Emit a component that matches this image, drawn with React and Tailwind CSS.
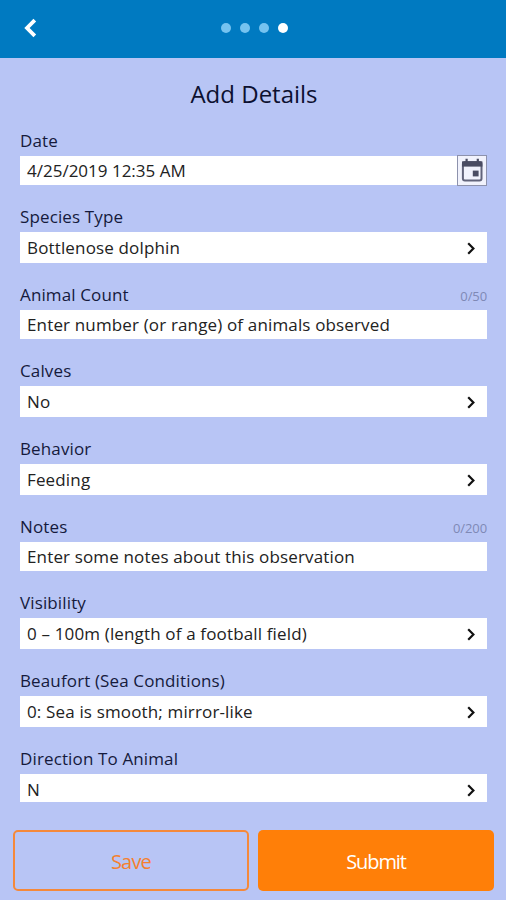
import clsx from "clsx";

const FIELDS = [
  { label: "Date", value: "4/25/2019 12:35 AM", type: "date" },
  { label: "Species Type", value: "Bottlenose dolphin", type: "select" },
  {
    label: "Animal Count",
    value: "Enter number (or range) of animals observed",
    type: "text",
    counter: "0/50",
  },
  { label: "Calves", value: "No", type: "select" },
  { label: "Behavior", value: "Feeding", type: "select" },
  {
    label: "Notes",
    value: "Enter some notes about this observation",
    type: "text",
    counter: "0/200",
  },
  { label: "Visibility", value: "0 – 100m (length of a football field)", type: "select" },
  { label: "Beaufort (Sea Conditions)", value: "0: Sea is smooth; mirror-like", type: "select" },
  { label: "Direction To Animal", value: "N", type: "select" },
];

const IconCalendar = () => (
  <svg viewBox="0 0 24 26" className="w-6 h-[26px]" fill="none">
    <rect x="2.9" y="4" width="18.6" height="18.6" rx="2" stroke="#62647b" strokeWidth="2" />
    <path d="M2 3.4h20.4v5.2H2z" fill="#4a4c62" />
    <path d="M6.6 0.8v4M17.8 0.8v4" stroke="#4a4c62" strokeWidth="2.2" />
    <rect x="12.8" y="12.6" width="5.8" height="5.8" fill="#4a4c62" />
  </svg>
);

const Chevron = () => (
  <svg viewBox="0 0 8 13" className="w-2 h-[13px] mr-3 mt-px" fill="none">
    <path d="M1.2 1.2 6.4 6.5 1.2 11.8" stroke="#111" strokeWidth="2.2" />
  </svg>
);

const Field = ({ label, value, type, counter }) => (
  <div className="flex flex-col">
    <div className="flex items-center justify-between h-6 mb-[3px]">
      <label className="text-[17px] leading-6 tracking-[0.13px] text-[#151a3c]">{label}</label>
      {counter && (
        <span className="text-[13px] leading-6 pt-0.5 tracking-[-0.1px] text-[#7f89b5]">{counter}</span>
      )}
    </div>
    <div
      className={clsx(
        "flex items-center justify-between bg-white pl-[7px]",
        type === "select" ? "h-[31px]" : "h-[29px]"
      )}
    >
      <span
        className={clsx(
          "text-[17px] leading-6 text-[#222] whitespace-nowrap",
          type === "date" ? "tracking-normal" : "tracking-[0.15px]"
        )}
      >
        {value}
      </span>
      {type === "select" && <Chevron />}
      {type === "date" && (
        <button className="flex items-center justify-center w-[30px] h-[31px] shrink-0 bg-[#f1f2fc] border border-[#8d92ad]">
          <IconCalendar />
        </button>
      )}
    </div>
  </div>
);

const App = () => {
  return (
    <main className="h-[900px] w-full flex flex-col overflow-hidden bg-[#b8c5f5] font-['Open_Sans','Noto_Sans',sans-serif]">
      {/* Top bar with back arrow and step dots */}
      <header className="grid grid-cols-3 items-center h-[58px] pb-0.5 shrink-0 bg-[#007ac1]">
        <svg viewBox="0 0 13 20" className="w-[13px] h-5 ml-[24px]" fill="none">
          <path d="M10.8 2.2 3 10 10.8 17.8" stroke="#fff" strokeWidth="3.8" />
        </svg>
        <div className="flex justify-center gap-[9.3px] pl-[3px]">
          <span className="size-2.5 shrink-0 rounded-full bg-[#75c3f0]" />
          <span className="size-2.5 shrink-0 rounded-full bg-[#75c3f0]" />
          <span className="size-2.5 shrink-0 rounded-full bg-[#75c3f0]" />
          <span className="size-2.5 shrink-0 rounded-full bg-white" />
        </div>
      </header>

      <h1 className="mt-[18px] pl-0.5 text-center text-[24px] leading-9 text-[#0c1030]">Add Details</h1>

      <section className="flex flex-col gap-5 mt-[17px] h-[673px] shrink-0 overflow-hidden pl-5 pr-[19px]">
        {FIELDS.map((field) => (
          <Field key={field.label} {...field} />
        ))}
      </section>

      <footer className="grid grid-cols-2 gap-[9px] mt-[28px] h-[61px] shrink-0 pl-[13px] pr-3">
        <button className="rounded-[5px] border-2 border-[#f5893a] pt-0.5 text-[20px] tracking-[-0.8px] text-[#f5802e]">
          Save
        </button>
        <button className="rounded-[5px] bg-[#ff7f08] pt-0.5 text-[20px] font-medium tracking-[-1.1px] text-white">
          Submit
        </button>
      </footer>
    </main>
  );
};

export default App;
